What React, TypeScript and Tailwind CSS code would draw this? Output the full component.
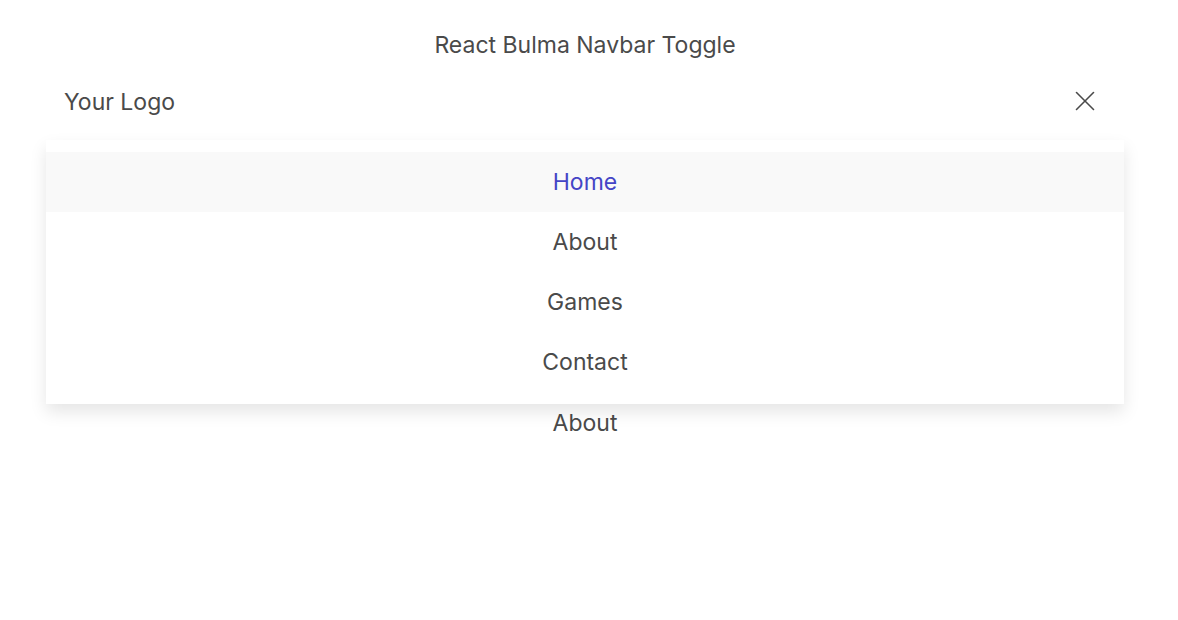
const links = ["Home", "About", "Games", "Contact"];

export default function App() {
  return (
    <div className="min-h-[620px] bg-white text-[#4a4a4a] font-['Inter','Liberation_Sans',sans-serif]">
      <div className="pl-[46px] pr-[54px]">
        <h1 className="pt-[30px] h-[76px] text-center text-[23px] leading-[30px]">React Bulma Navbar Toggle</h1>
        <nav className="relative">
          <div className="flex items-center justify-between h-[52px] pl-[18px] pr-[29px]">
            <span className="text-[23px] leading-[30px]">Your Logo</span>
            <svg width="20" height="20" viewBox="0 0 20 20" className="-mt-[3px]" stroke="#4a4a4a" strokeWidth="1.6" strokeLinecap="round">
              <line x1="1.5" y1="1.5" x2="18.5" y2="18.5" />
              <line x1="18.5" y1="1.5" x2="1.5" y2="18.5" />
            </svg>
          </div>
          <div className="h-[12px]" />
          <div className="flex flex-col">
            <div className="relative z-10 bg-white py-[12px] shadow-[0_8px_16px_rgba(10,10,10,0.1)]">
              {links.map((l, i) => (
                <a
                  key={l}
                  className={
                    i === 0
                      ? "block h-[60px] leading-[60px] text-center text-[23px] bg-[#f9f9f9] text-[#4545c6]"
                      : "block h-[60px] leading-[60px] text-center text-[23px]"
                  }
                >
                  {l}
                </a>
              ))}
            </div>
            <a className="block h-[38px] leading-[38px] text-center text-[23px]">About</a>
          </div>
        </nav>
      </div>
    </div>
  );
}
